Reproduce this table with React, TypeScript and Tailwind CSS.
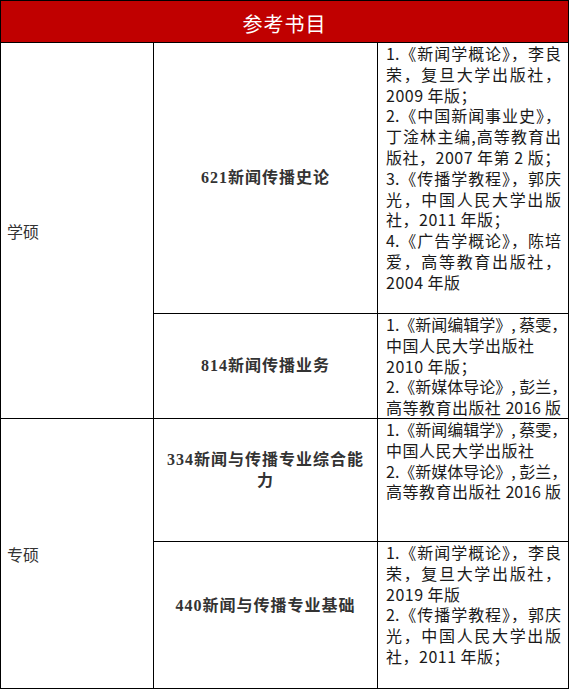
import React from "react";

type Line = { t: string; j?: boolean };

const L = (t: string, j = false): Line => ({ t, j });

function Books({ lines }: { lines: Line[] }) {
  return (
    <div className="bg-white pl-[8px] pr-[7px] text-[16px] leading-[20.8px] text-[#1a1a1a]">
      {lines.map((l, i) =>
        l.j ? (
          <div key={i} className="whitespace-nowrap text-justify [text-align-last:justify]">
            {l.t}
          </div>
        ) : (
          <div key={i} className="whitespace-nowrap tracking-[0.5px]">
            {l.t}
          </div>
        )
      )}
    </div>
  );
}

function Course({ lines, shift = false }: { lines: string[]; shift?: boolean }) {
  return (
    <div
      className={
        "bg-white flex flex-col items-center justify-center text-center font-bold text-[16px] leading-[20.8px] text-[#333] font-['Liberation_Serif','Noto_Sans_CJK_SC',serif] " +
        (shift ? "pb-[18px]" : "")
      }
    >
      {lines.map((t, i) => (
        <div key={i} className="whitespace-nowrap tracking-[1px]">
          {t}
        </div>
      ))}
    </div>
  );
}

export default function App() {
  return (
    <div className="w-[569px] h-[689px] bg-white font-['Noto_Sans_CJK_SC',sans-serif]">
      <div className="grid grid-cols-[152px_223px_190px] grid-rows-[41px_270px_104px_122px_146px] gap-px bg-black p-px">
        <div className="col-span-3 bg-[#c00000] flex items-center justify-center pt-[4px] text-white text-[20px] tracking-[1px]">
          参考书目
        </div>

        <div className="row-span-2 bg-white flex items-center pl-[6px] text-[16px] text-[#333]">
          学硕
        </div>
        <Course lines={["621新闻传播史论"]} />
        <Books
          lines={[
            L("1.《新闻学概论》，李良", true),
            L("荣，复旦大学出版社，", true),
            L("2009 年版；"),
            L("2.《中国新闻事业史》，", true),
            L("丁淦林主编,高等教育出", true),
            L("版社，2007 年第 2 版；"),
            L("3.《传播学教程》，郭庆", true),
            L("光，中国人民大学出版", true),
            L("社，2011 年版；"),
            L("4.《广告学概论》，陈培", true),
            L("爱，高等教育出版社，", true),
            L("2004 年版"),
          ]}
        />

        <Course lines={["814新闻传播业务"]} />
        <Books
          lines={[
            L("1.《新闻编辑学》, 蔡雯，", true),
            L("中国人民大学出版社"),
            L("2010 年版；"),
            L("2.《新媒体导论》, 彭兰，", true),
            L("高等教育出版社 2016 版", true),
          ]}
        />

        <div className="row-span-2 bg-white flex items-center pl-[6px] text-[16px] text-[#333]">
          专硕
        </div>
        <Course lines={["334新闻与传播专业综合能", "力"]} shift />
        <Books
          lines={[
            L("1.《新闻编辑学》, 蔡雯，", true),
            L("中国人民大学出版社"),
            L("2.《新媒体导论》, 彭兰，", true),
            L("高等教育出版社 2016 版", true),
          ]}
        />

        <Course lines={["440新闻与传播专业基础"]} shift />
        <Books
          lines={[
            L("1.《新闻学概论》，李良", true),
            L("荣，复旦大学出版社，", true),
            L("2019 年版"),
            L("2.《传播学教程》，郭庆", true),
            L("光，中国人民大学出版", true),
            L("社，2011 年版；"),
          ]}
        />
      </div>
    </div>
  );
}
